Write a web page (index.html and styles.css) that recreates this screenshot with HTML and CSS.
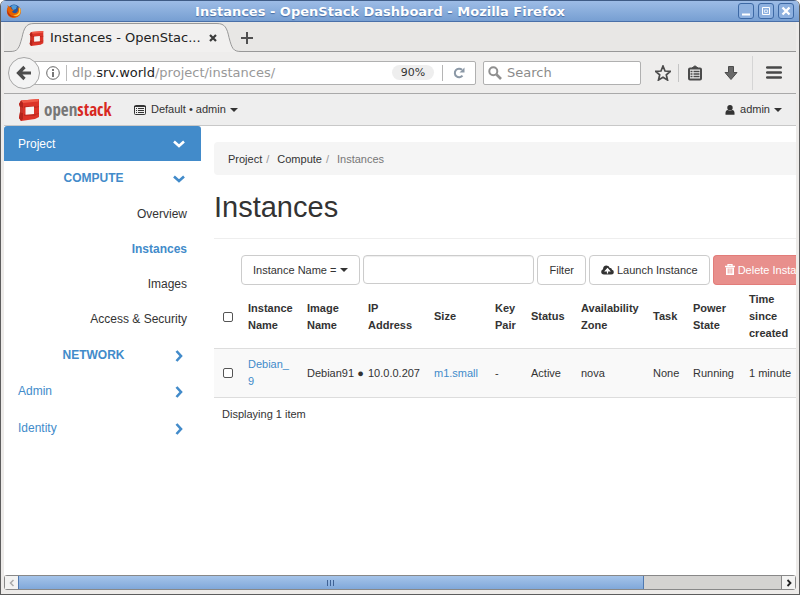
FILE: index.html
```html
<!DOCTYPE html>
<html lang="en">
<head>
<meta charset="utf-8">
<title>Instances - OpenStack Dashboard</title>
<link rel="stylesheet" href="styles.css">
</head>
<body>
<svg class="defs" aria-hidden="true">
  <symbol id="cube" viewBox="0 0 22 22">
    <path fill="#dc3428" d="M3 1.500 21 0v18L17 20 3 22l-2-3 1-6V8L1 5z"/>
    <path fill="#ef5a48" d="M3 1.500 21 0l-1 2.500L5 4z"/>
    <path fill="#b3251c" d="M1 5l2-3.500L5 4v5L2 8zM2 13l3 1v6l-2 2-2-3z"/>
    <path fill="#c4362b" d="M2 8l3 1v5l-3-1z"/>
    <path fill="#a9231b" d="M6 7.500h11.500v1H6zM6 15.500h11.500v1H6z"/>
    <path fill="#f8f4f2" d="M7.500 8.200 16 7.500v7.500l-8.500.800z"/>
    <path fill="#c02b21" d="M17 8l4-1v1l-4 1zM17 15l4-1v1l-4 1z"/>
  </symbol>
  <symbol id="down" viewBox="0 0 12 12"><path d="M1 3.500 6 8l5-4.500" fill="none" stroke="currentColor" stroke-width="2.600"/></symbol>
  <symbol id="right" viewBox="0 0 12 12"><path d="M3.500 1 8 6l-4.500 5" fill="none" stroke="currentColor" stroke-width="2.600"/></symbol>
</svg>
<div class="window">
  <header class="titlebar">
    <svg class="firefox" viewBox="0 0 16 16" aria-hidden="true">
      <circle cx="8" cy="8" r="6.500" fill="#26549a"/>
      <path d="M5 3q3-2 6 0l-1 3-3 1z" fill="#4f9bd8"/>
      <path d="M1.500 2 3.500 4 6 4.500 5 6l3 1-2 1.500q1 2.500 4 1.500 3-1.500 1.500-6l2.500 3-.5-3.500q2.500 5 .5 8.500Q11 15.500 7 15 1 14 .8 8q0-3 1-4z" fill="#e66000"/>
      <path d="M12.500 4q1.500 4-.500 6.500-2 2-5 1.500 4 2 6.500-.500Q15 9 14.500 6z" fill="#ffcb3d"/>
      <path d="M1.500 6.500q.500 4 3.500 6 2 1.500 5 1-5 1.500-7.500-1.500Q.8 10 1.500 6.500" fill="#b52b12"/>
    </svg>
    <span class="title">Instances - OpenStack Dashboard - Mozilla Firefox</span>
    <div class="controls">
      <button aria-label="Minimize"><svg viewBox="0 0 14 14"><path d="M3 10.500h8" stroke="#fff" stroke-width="2"/></svg></button>
      <button aria-label="Maximize"><svg viewBox="0 0 14 14"><path d="M3.500 3.500h7v7h-7z" fill="none" stroke="#fff"/><path d="M5.500 6h3v2.500h-3z" fill="none" stroke="#dce8f8"/></svg></button>
      <button aria-label="Close window"><svg viewBox="0 0 14 14"><path d="m3.500 3.500 7 7m0-7-7 7" stroke="#fff" stroke-width="2.300"/></svg></button>
    </div>
  </header>
  <div class="browser">
    <div class="tabs">
      <svg class="curve" viewBox="0 0 24 29" aria-hidden="true"><path d="M0 29v-.500c8 0 9-3 12-14C14 5 16 1 24 .5V29z" fill="#f1f0ef"/><path d="M0 28.500c8 0 9-3 12-14C14 5 16 .5 24 .5" fill="none" stroke="#989898"/></svg>
      <div class="tab"><svg class="favicon"><use href="#cube"/></svg><span>Instances - OpenStac...</span><button class="bare" aria-label="Close tab"><svg viewBox="0 0 8 8"><path d="m1 1 6 6m0-6L1 7" stroke="#3b3b3b" stroke-width="2.200"/></svg></button></div>
      <svg class="curve" viewBox="0 0 24 29" aria-hidden="true"><path d="M0 29V.5c8 .5 10 4.500 12 14 3 11 4 14 12 14v.500z" fill="#f1f0ef"/><path d="M0 .5c8 0 10 4.500 12 14 3 11 4 14 12 14" fill="none" stroke="#989898"/></svg>
      <button class="bare plus" aria-label="New tab"><svg viewBox="0 0 12 12"><path d="M6 0v12M0 6h12" stroke="#505050" stroke-width="2"/></svg></button>
    </div>
    <div class="nav">
      <button class="back" aria-label="Back"><svg viewBox="0 0 16 16"><path d="M8.500 2 2.500 8l6 6M3 8h12" fill="none" stroke="#4d4d4d" stroke-width="3.200"/></svg></button>
      <div class="url">
        <svg class="info" viewBox="0 0 14 14"><circle cx="7" cy="7" r="6.300" fill="none" stroke="#666"/><path d="M7 6v5M7 3v2" stroke="#555" stroke-width="1.600"/></svg>
        <span class="address">dlp.<b>srv.world</b>/project/instances/</span>
        <span class="percent">90%</span>
        <button class="bare reload" aria-label="Reload"><svg viewBox="0 0 12 12"><path d="M9.500 8.700A4.300 4.300 0 1 1 9 2.800" fill="none" stroke="#8b98a6" stroke-width="2"/><path d="M11.500.5v5h-5z" fill="#8b98a6"/></svg></button>
      </div>
      <label class="search"><svg viewBox="0 0 14 14"><circle cx="5.300" cy="5.300" r="4" fill="none" stroke="#909090" stroke-width="2"/><path d="m8.500 8.500 4.500 4.500" stroke="#909090" stroke-width="2.600"/></svg><input type="text" placeholder="Search" aria-label="Search"></label>
      <div class="tools">
        <button class="bare star" aria-label="Bookmark"><svg viewBox="0 0 16 16"><path d="m8 1 2 5 5.300.4-4 3.400 1.200 5.200L8 12.200 3.500 15l1.200-5.200-4-3.400L6 6z" fill="none" stroke="#4b4b4b" stroke-width="1.700"/></svg></button>
        <button class="bare clip" aria-label="Bookmarks list"><svg viewBox="0 0 16 16"><path d="M5 3 8 .8 11 3z" fill="#4b4b4b" stroke="#4b4b4b"/><rect x="2" y="3.500" width="12" height="11" rx="1" fill="#eee" stroke="#4b4b4b" stroke-width="2"/><path d="M3.500 6.500h2M6.500 6.500h6M3.500 9h2M6.500 9h6M3.500 11.500h2M6.500 11.500h6" stroke="#4b4b4b" stroke-width="1.300"/></svg></button>
        <button class="bare download" aria-label="Downloads"><svg viewBox="0 0 16 16"><path d="M5.500 1.500h5v6h3.500L8 14.500 2 7.500h3.500z" fill="#686868" stroke="#4c4c4c"/></svg></button>
        <button class="bare menu" aria-label="Menu"><svg viewBox="0 0 16 16"><path d="M1.200 2.500h13.600M1.200 7.500h13.600M1.200 12.500h13.600" stroke="#484848" stroke-width="2.600" stroke-linecap="round"/></svg></button>
      </div>
    </div>
    <div class="page">
      <div class="topbar">
        <a class="brand" href="#"><svg><use href="#cube"/></svg><span>open<b>stack</b></span></a>
        <button class="bare context"><svg viewBox="0 0 12 10"><rect x=".5" y=".5" width="11" height="9" rx="1" fill="none" stroke="#333"/><path d="M0 1.500h12M2 3.500h1m1 0h6M2 5.500h1m1 0h6M2 7.500h1m1 0h6" stroke="#333"/></svg>Default • admin<i class="caret"></i></button>
        <button class="bare user"><svg viewBox="0 0 10 10"><circle cx="5" cy="2.700" r="2.700" fill="#333"/><path d="M.5 9.700Q0 5 3 5q2 1.500 4 0 3 0 2.500 4.700z" fill="#333"/></svg>admin<i class="caret"></i></button>
      </div>
      <div class="layout">
        <nav class="sidebar">
          <a class="panel open" href="#">Project<svg><use href="#down"/></svg></a>
          <a class="group" href="#"><span>COMPUTE</span><svg><use href="#down"/></svg></a>
          <ul>
            <li><a href="#">Overview</a></li>
            <li><a class="current" href="#">Instances</a></li>
            <li><a href="#">Images</a></li>
            <li><a href="#">Access &amp; Security</a></li>
          </ul>
          <a class="group" href="#"><span>NETWORK</span><svg><use href="#right"/></svg></a>
          <a class="panel" href="#">Admin<svg><use href="#right"/></svg></a>
          <a class="panel" href="#">Identity<svg><use href="#right"/></svg></a>
        </nav>
        <main>
          <ol class="breadcrumb"><li><a href="#">Project</a></li><li><a href="#">Compute</a></li><li>Instances</li></ol>
          <h1>Instances</h1>
          <div class="actions">
            <button class="btn">Instance Name =<i class="caret"></i></button>
            <input class="filter" type="text" aria-label="Filter instances">
            <button class="btn">Filter</button>
            <button class="btn"><svg class="cloud" viewBox="0 0 13 10"><path d="M3 9.500Q.2 9.500.2 6.800.2 5 2 4.300 2 .5 5.500.5q2.700 0 3.300 2.500 2-.5 2.200 1.700 1.800.5 1.800 2.300 0 2.500-2.600 2.500z" fill="#333"/><path d="M6.500 8.500V5.500M4.500 5.800l2-2.200 2 2.200z" fill="#fff" stroke="#fff" stroke-width="1.200"/></svg>Launch Instance</button>
            <button class="btn danger"><svg class="trash" viewBox="0 0 10 12"><path d="M0 2.500h10M3 2V.7h4V2" fill="none" stroke="#fff" stroke-width="1.300"/><path d="M1 3.500h8V11H1z" fill="#fff"/><path d="M3.200 4.500v5M5 4.500v5M6.800 4.500v5" stroke="#e88f8c" stroke-width=".8"/></svg>Delete Insta</button>
          </div>
          <table>
            <colgroup><col class="c-check"><col class="c-name"><col class="c-image"><col class="c-ip"><col class="c-size"><col class="c-key"><col class="c-status"><col class="c-zone"><col class="c-task"><col class="c-power"><col class="c-time"></colgroup>
            <thead><tr><th><input type="checkbox" aria-label="Select all"></th><th>Instance Name</th><th>Image Name</th><th>IP Address</th><th>Size</th><th>Key Pair</th><th>Status</th><th>Availability Zone</th><th>Task</th><th>Power State</th><th>Time since created</th></tr></thead>
            <tbody><tr><td><input type="checkbox" aria-label="Select Debian_9"></td><td><a href="#">Debian_<wbr>9</a></td><td>Debian91 ●</td><td>10.0.0.207</td><td><a href="#">m1.small</a></td><td>-</td><td>Active</td><td>nova</td><td>None</td><td>Running</td><td>1 minute</td></tr></tbody>
          </table>
          <p class="count">Displaying 1 item</p>
        </main>
      </div>
    </div>
    <div class="scroll">
      <button aria-label="Scroll left"><svg viewBox="0 0 8 8"><path d="M5.500 1 2.500 4l3 3" fill="none" stroke="#aaa" stroke-width="1.500"/></svg></button>
      <div class="track"><div class="thumb"><svg viewBox="0 0 8 6"><path d="M.5 0v6M3.500 0v6M6.500 0v6" stroke="#3f6295"/></svg></div></div>
      <button aria-label="Scroll right"><svg viewBox="0 0 8 8"><path d="m2.500 1 3 3-3 3" fill="none" stroke="#222" stroke-width="1.800"/></svg></button>
    </div>
  </div>
</div>
</body>
</html>
```
FILE: styles.css
```css
* { box-sizing: border-box; }
body { margin: 0; background: #fff; color: #333; font: 11px/17px "Liberation Sans", Arial, sans-serif; }
button, input { font: inherit; color: inherit; }
button { padding: 0; }
a { color: #428bca; text-decoration: none; }
svg { display: block; flex: none; }
.defs { position: absolute; width: 0; height: 0; }
.bare { display: flex; align-items: center; justify-content: center; border: 0; background: none; white-space: nowrap; }

.window { display: flex; flex-direction: column; height: 100vh; border: 1px solid #5d5d5d; border-top: 0; border-radius: 6px 6px 0 0; overflow: hidden; background: #edebe9; }
.titlebar { display: flex; align-items: center; height: 22px; flex: none; padding: 0 5px; border-top: 1px solid #3f5b85; border-bottom: 1px solid #4a70a8; background: linear-gradient(#9dbce6, #779fd2); }
.firefox { width: 16px; height: 16px; }
.title { flex: 1; padding-top: 2px; text-align: center; color: #fff; font: bold 13px/20px "DejaVu Sans", sans-serif; text-shadow: 0 1px 1px #456ba3; white-space: nowrap; overflow: hidden; }
.controls { display: flex; gap: 4px; }
.controls button { width: 16px; height: 16px; border: 1px solid #3d69a5; border-radius: 3px; background: #8db0df; }
.controls svg { width: 14px; height: 14px; }

.browser { display: flex; flex-direction: column; flex: 1; min-height: 0; padding: 0 3px 4px; }
.tabs { display: flex; height: 30px; flex: none; padding-top: 1px; background: #e8e7e5 linear-gradient(#989898, #989898) bottom / 100% 1px no-repeat; font: 13px/28px "DejaVu Sans", sans-serif; color: #222; }
.curve { width: 24px; height: 29px; }
.curve:first-child { margin-left: 6px; }
.tab { display: flex; align-items: center; width: 183px; border-top: 1px solid #989898; background: #f1f0ef; white-space: nowrap; }
.favicon { width: 15px; height: 15px; margin: 0 6px 0 -5px; }
.tab span { flex: 1; }
.tab svg:last-child { width: 8px; height: 8px; }
.plus svg { width: 12px; height: 12px; }

.nav { display: flex; align-items: center; height: 42px; flex: none; padding: 0 1px 0 4px; border-bottom: 1px solid #a9a9a9; background: #eeedec; font: 13px/22px "DejaVu Sans", sans-serif; }
.back { position: relative; z-index: 1; display: flex; align-items: center; justify-content: center; width: 32px; height: 32px; border: 1px solid #a6a6a6; border-radius: 50%; background: #f4f4f4; }
.back svg { width: 16px; height: 16px; }
.url { display: flex; align-items: center; flex: 1; height: 24px; margin: 0 7px 0 -10px; padding-left: 15px; border: 1px solid #b0b0b0; border-radius: 2px; background: #fff; white-space: nowrap; }
.info { width: 14px; height: 14px; }
.address { flex: 1; height: 16px; margin-left: 6px; padding-left: 5px; border-left: 1px solid #bbb; line-height: 16px; color: #999; }
.address b { font-weight: normal; color: #222; }
.percent { width: 42px; border-radius: 8px; background: #eee; color: #333; font-size: 11px; line-height: 15px; text-align: center; }
.reload { width: 33px; height: 16px; margin-left: 8px; border-left: 1px solid #b5b5b5; }
.reload svg { width: 12px; height: 12px; }
.search { display: flex; align-items: center; gap: 5px; width: 158px; height: 24px; padding: 0 4px; border: 1px solid #b0b0b0; border-radius: 2px; background: #fff; }
.search svg { width: 14px; height: 14px; }
.search input { width: 100%; min-width: 0; padding: 0; border: 0; background: none; outline: 0; }
.search input::placeholder { color: #8b8b8b; opacity: 1; }
.tools { display: flex; align-items: center; margin-left: 12px; }
.tools svg { width: 16px; height: 16px; }
.star { width: 20px; }
.clip { width: 32px; height: 18px; margin-left: 5px; border-left: 1px solid #c5c5c5; }
.download { width: 42px; }
.menu { width: 43px; height: 34px; border-left: 1px solid #d5d5d5; }

.page { flex: 1; min-height: 0; background: #fff; overflow: hidden; }
.topbar { display: flex; align-items: center; height: 32px; padding: 0 14px; border-bottom: 1px solid #c8c8c8; background: #eee; }
.brand { display: flex; align-items: center; gap: 4px; width: 93px; color: #777; font: 17px/24px "Open Sans Condensed", "Liberation Sans Narrow", "DejaVu Sans Condensed", sans-serif; }
.brand svg { width: 22px; height: 22px; }
.brand b { color: #d8281f; }
.context { margin-left: 23px; }
.context svg { width: 12px; height: 10px; margin-right: 5px; }
.user { margin-left: auto; }
.user svg { width: 10px; height: 10px; margin-right: 5px; }
.caret { display: inline-block; margin-left: 4px; border: 4px solid transparent; border-top-color: currentColor; border-bottom: 0; }

.layout { display: flex; }
.sidebar { width: 197px; flex: none; font-size: 12px; }
.sidebar svg { width: 12px; height: 12px; }
.panel, .group { display: flex; align-items: center; justify-content: space-between; padding: 0 16px 0 14px; }
.panel { height: 37px; }
.panel.open { height: 35px; padding-top: 1px; border-radius: 3px 3px 0 0; background: #428bca; color: #fff; }
.group { height: 35px; font-weight: bold; }
.group span { flex: 1; padding-right: 4px; text-align: center; }
.sidebar ul { margin: 1px 0; padding: 0 14px 0 0; list-style: none; text-align: right; }
.sidebar li a { display: block; color: #333; line-height: 35px; }
.sidebar li .current { color: #428bca; font-weight: bold; }

main { flex: 1; min-width: 0; margin-left: 13px; padding-top: 16px; }
.breadcrumb { display: flex; margin: 0; padding: 1px 14px 0; border-radius: 4px 0 0 4px; background: #f5f5f5; line-height: 32px; list-style: none; color: #777; }
.breadcrumb a { color: #333; }
.breadcrumb li + li::before { content: "/"; margin: 0 8px 0 4px; color: #999; }
h1 { margin: 16px 0; padding-bottom: 14px; border-bottom: 1px solid #eee; font-size: 29px; font-weight: normal; line-height: 33px; }
.actions { display: flex; gap: 3px; padding-left: 27px; }
.btn { display: flex; flex: none; align-items: center; height: 30px; padding: 0 11px; border: 1px solid #ccc; border-radius: 4px; background: #fff; white-space: nowrap; }
.filter { width: 171px; height: 29px; flex: none; padding: 0 8px; border: 1px solid #ccc; border-radius: 4px; box-shadow: inset 0 1px 1px #eee; }
.cloud { width: 13px; height: 10px; margin-right: 3px; }
.trash { width: 10px; height: 12px; margin-right: 3px; }
.danger { padding-right: 0; flex: 1 0 auto; border-color: #e27c79; border-right: 0; border-radius: 4px 0 0 4px; background: #e88f8c; color: #fff; }
table { width: 590px; table-layout: fixed; border-collapse: collapse; }
th, td { padding: 7px; border-bottom: 1px solid #ddd; text-align: left; vertical-align: middle; }
th { padding: 6px 7px; }
td { background: #f9f9f9; white-space: nowrap; }
td:nth-child(2) { white-space: normal; }
td:nth-child(3) { padding-right: 0; }
table input { display: block; width: 10px; height: 10px; margin: 0 0 0 2px; appearance: none; border: 1px solid #555; border-radius: 2px; background: #fff; }
.c-check { width: 27px; }
.c-name { width: 59px; }
.c-image { width: 61px; }
.c-ip { width: 66px; }
.c-size { width: 61px; }
.c-key { width: 36px; }
.c-status { width: 50px; }
.c-zone { width: 72px; }
.c-task { width: 40px; }
.c-power { width: 56px; }
.count { margin: 8px; }

.scroll { display: flex; height: 15px; flex: none; border: 1px solid #888; border-radius: 3px; background: #d4d3d1; }
.scroll > button { width: 13px; flex: none; border: 0; background: #f3f3f2; display: flex; align-items: center; justify-content: center; }
.scroll button svg { width: 8px; height: 8px; }
.track { flex: 1; border-right: 1px solid #888; }
.thumb { display: flex; align-items: center; justify-content: center; width: 82%; height: 13px; border: solid #5079b0; border-width: 0 1px; background: linear-gradient(#a5c4ea, #80a8da); }
.thumb svg { width: 8px; height: 6px; }
```
